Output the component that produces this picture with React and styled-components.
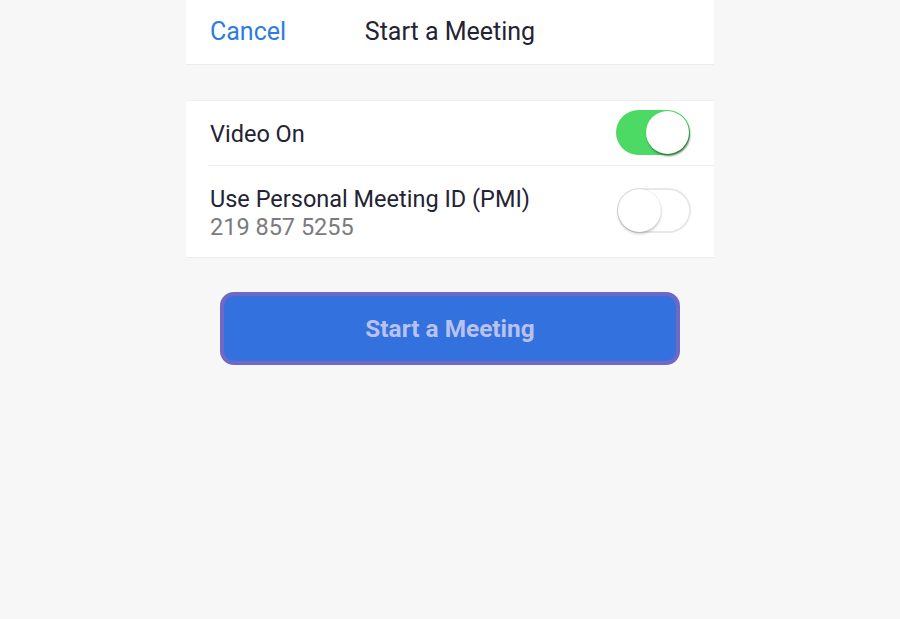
import React from "react";
import styled, { createGlobalStyle } from "styled-components";

const Global = createGlobalStyle`
  html, body { margin: 0; padding: 0; background: #f7f7f7; }
  body { font-family: Roboto, "Noto Sans", sans-serif; }
`;

const Page = styled.div`
  width: 900px;
  height: 619px;
  background: #f7f7f7;
  display: flex;
  justify-content: center;
`;

const Column = styled.div`
  width: 528px;
  display: flex;
  flex-direction: column;
`;

const Header = styled.div`
  height: 64px;
  background: #fff;
  border-bottom: 1px solid #ececec;
  display: flex;
  align-items: center;
  position: relative;
  padding-left: 24px;
`;

const Cancel = styled.span`
  color: #2d7ce3;
  font-size: 25px;
  margin-top: -1px;
`;

const Title = styled.span`
  position: absolute;
  left: 0;
  right: 0;
  text-align: center;
  font-size: 25px;
  color: #232333;
  margin-top: -1px;
  pointer-events: none;
`;

const Section = styled.div`
  margin-top: 35px;
  background: #fff;
  border-top: 1px solid #efefef;
  border-bottom: 1px solid #ececec;
`;

const Row = styled.div`
  height: ${(p) => p.$h}px;
  display: flex;
  align-items: center;
  justify-content: space-between;
  padding: 0 24px;
  position: relative;
  ${(p) =>
    p.$divider &&
    `&::after { content: ""; position: absolute; left: 22px; right: 0; bottom: 0; height: 1px; background: #ececec; }`}
`;

const Labels = styled.div`
  display: flex;
  flex-direction: column;
  margin-top: 3px;
`;

const Label = styled.span`
  font-size: 23.5px;
  color: #232333;
  line-height: 28px;
`;

const Sub = styled.span`
  font-size: 23.5px;
  color: #7b7b7e;
  line-height: 28px;
`;

const Track = styled.div`
  width: 74px;
  height: 45px;
  border-radius: 23px;
  box-sizing: border-box;
  background: ${(p) => (p.$on ? "#4cd964" : "#fff")};
  border: ${(p) => (p.$on ? "none" : "2px solid #e8e8e8")};
  position: relative;
  margin-right: ${(p) => (p.$on ? "0" : "-1px")};
  margin-top: ${(p) => (p.$on ? "-3px" : "-2px")};
`;

const Knob = styled.div`
  position: absolute;
  top: ${(p) => (p.$on ? "1px" : "-1px")};
  ${(p) => (p.$on ? "right: 1px;" : "left: -1px;")}
  width: 43px;
  height: 43px;
  border-radius: 50%;
  background: #fff;
  box-shadow: ${(p) =>
    p.$on ? "1px 2px 2px rgba(20, 90, 30, 0.75)" : "0 2px 3px rgba(0,0,0,0.2), 0 0 0 1px rgba(0,0,0,0.05)"};
`;

const Toggle = ({ on }) => (
  <Track $on={on}>
    <Knob $on={on} />
  </Track>
);

const ButtonWrap = styled.div`
  display: flex;
  justify-content: center;
  margin-top: 34px;
`;

const StartButton = styled.button`
  width: 460px;
  height: 73px;
  box-sizing: border-box;
  border: 4px solid #7068c6;
  border-radius: 14px;
  background: #3371de;
  color: #b9c2ee;
  font-family: Roboto, sans-serif;
  font-weight: 700;
  font-size: 24.4px;
  padding: 0;
`;

export default function App() {
  return (
    <Page>
      <Global />
      <Column>
        <Header>
          <Cancel>Cancel</Cancel>
          <Title>Start a Meeting</Title>
        </Header>
        <Section>
          <Row $h={65} $divider>
            <Label>Video On</Label>
            <Toggle on />
          </Row>
          <Row $h={91}>
            <Labels>
              <Label>Use Personal Meeting ID (PMI)</Label>
              <Sub>219 857 5255</Sub>
            </Labels>
            <Toggle on={false} />
          </Row>
        </Section>
        <ButtonWrap>
          <StartButton>Start a Meeting</StartButton>
        </ButtonWrap>
      </Column>
    </Page>
  );
}
